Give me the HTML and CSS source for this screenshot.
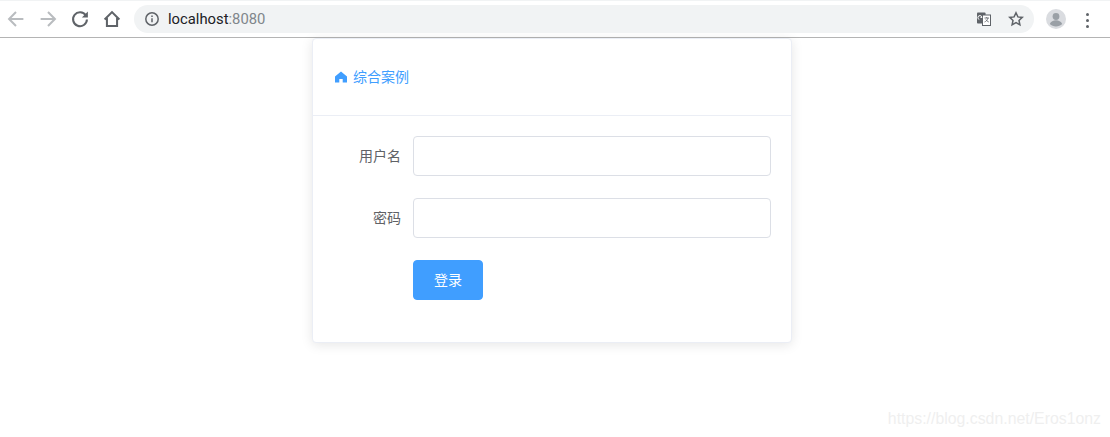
FILE: index.html
```html
<!DOCTYPE html>
<html lang="zh">
<head>
<meta charset="utf-8">
<title>综合案例</title>
<link rel="stylesheet" href="styles.css">
</head>
<body>
<header class="toolbar">
  <svg class="nav-icon" viewBox="-1 -1 26 26"><path class="dis" d="M20 12H5M12 4.500 4.500 12l7.500 7.500"/></svg>
  <svg class="nav-icon" viewBox="-1 -1 26 26"><path class="dis" d="M4 12h15M12 4.500l7.500 7.500-7.500 7.500"/></svg>
  <svg class="nav-icon" viewBox="-1 -1 26 26"><path class="act" d="M18.300 8.200A7.500 7.500 0 1 0 19.500 12.500"/><path class="fill" d="M20.500 4v6.500H14z"/></svg>
  <svg class="nav-icon" viewBox="-1 -1 26 26"><path class="act" d="M4 12.500 12 4.500l8 8M6.500 11v8.500h11V11"/></svg>
  <div class="omnibox">
    <svg class="info" viewBox="0 0 16 16"><circle cx="8" cy="8" r="6.200"/><path d="M8 7.200v4M8 4.400v1.600"/></svg>
    <span class="url">localhost<span class="port">:8080</span></span>
    <span class="omni-space"></span>
    <svg class="translate" viewBox="0 0 16 16"><rect x="1" y="1.500" width="8.500" height="11" rx=".8" class="t-dark"/><rect x="6.500" y="4" width="8" height="10.500" class="t-light"/><path class="t-w" d="M3.300 8.500a2 2 0 1 1 2.600-2H4.500"/><path class="t-k" d="M8.500 7h4.500M10.700 6v1M12 7c-.5 2-2 3.500-3.500 4M9.800 8.500c.6 1 1.600 2 3 2.500"/></svg>
    <svg class="star" viewBox="0 0 16 16"><path d="M8 1.800l1.900 4.100 4.400.5-3.300 3 .9 4.400L8 11.600l-3.900 2.200.9-4.400-3.300-3 4.400-.5z"/></svg>
  </div>
  <svg class="avatar" viewBox="0 0 20 20"><circle cx="10" cy="10" r="10" class="av-bg"/><circle cx="10" cy="7.500" r="3.400" class="av-fg"/><path class="av-fg" d="M3.800 15c1-2.600 3.600-3.700 6.200-3.700s5.200 1.100 6.200 3.700c-3 3.300-9.400 3.300-12.400 0z"/></svg>
  <div class="menu"><i></i><i></i><i></i></div>
</header>
<main class="page">
  <section class="card">
    <div class="card-header">
      <svg class="home" viewBox="0 0 12 12"><path d="M6 .5 0 5.600V11.500h4.300V8h3.400v3.500H12V5.600z"/></svg>
      <span class="title">综合案例</span>
    </div>
    <form class="card-body">
      <div class="row"><label class="label">用户名</label><input class="input" type="text"></div>
      <div class="row"><label class="label">密码</label><input class="input" type="password"></div>
      <div class="row last"><span class="label"></span><button class="btn" type="button">登录</button></div>
    </form>
  </section>
</main>
<div class="watermark">https://blog.csdn.net/Eros1onz</div>
</body>
</html>
```
FILE: styles.css
```css
* { box-sizing: border-box; }
html, body { margin: 0; padding: 0; background: #fff; }
body { height: 437px; overflow: hidden; position: relative; font-family: "Noto Sans CJK SC", "Liberation Sans", sans-serif; }
.toolbar { height: 38px; padding: 5px 0 0 4px; display: flex; align-items: flex-start; background: #fff; border-bottom: 1px solid #b4b4b4; box-shadow: inset 0 1px 0 #f1f3f4; }
.nav-icon { width: 24px; height: 24px; margin: 2px 8px 0 0; flex: none; fill: none; stroke-width: 2.200; }
.nav-icon .dis { stroke: #b9bcbf; }
.nav-icon .act { stroke: #5f6368; }
.nav-icon .fill { fill: #5f6368; stroke: none; }
.omnibox { width: 900px; height: 28px; margin-left: 2px; padding: 0 9px 0 10px; background: #f1f3f4; border-radius: 14px; display: flex; align-items: center; }
.info { width: 16px; height: 16px; fill: none; stroke: #5f6368; stroke-width: 1.500; flex: none; }
.url { margin-left: 8px; font: 14.800px "Roboto", "Liberation Sans", sans-serif; color: #202124; }
.port { color: #80868b; }
.omni-space { flex: 1; }
.translate { width: 16px; height: 16px; margin-right: 16px; flex: none; }
.t-dark { fill: #5f6368; }
.t-light { fill: #fff; stroke: #5f6368; stroke-width: 1; }
.t-w { fill: none; stroke: #fff; stroke-width: 1; }
.t-k { fill: none; stroke: #5f6368; stroke-width: .8; }
.star { width: 16px; height: 16px; margin-right: 1px; fill: none; stroke: #5f6368; stroke-width: 1.500; flex: none; }
.avatar { width: 20px; height: 20px; margin: 4px 0 0 12px; flex: none; }
.av-bg { fill: #dadce0; }
.av-fg { fill: #9aa0a6; }
.menu { margin: 8px 0 0 20px; display: flex; flex-direction: column; gap: 3px; }
.menu i { display: block; width: 3px; height: 3px; background: #5f6368; border-radius: 50%; }
.page { padding-left: 312px; }
.card { width: 480px; background: #fff; border: 1px solid #ebeef5; border-radius: 4px; box-shadow: 0 2px 12px rgba(0, 0, 0, .1); }
.card-header { height: 77px; padding: 0 20px 0 22px; display: flex; align-items: center; border-bottom: 1px solid #ebeef5; }
.home { width: 12px; height: 12px; fill: #409eff; flex: none; }
.title { margin-left: 6px; padding-bottom: 2px; font-size: 14px; line-height: 20px; color: #409eff; }
.card-body { padding: 20px 20px 42px 20px; }
.row { display: flex; align-items: center; margin-bottom: 22px; }
.row.last { margin-bottom: 0; }
.label { width: 80px; padding: 0 12px 2px 0; text-align: right; font-size: 14px; color: #606266; flex: none; }
.input { width: 358px; height: 40px; padding: 0 15px; border: 1px solid #dcdfe6; border-radius: 4px; background: #fff; outline: none; }
.btn { width: 70px; height: 40px; padding: 0 0 2px; border: 1px solid #409eff; border-radius: 4px; background: #409eff; color: #fff; font: 14px "Noto Sans CJK SC", sans-serif; }
.watermark { position: absolute; right: 9px; top: 409px; font: 15.850px/20px "Liberation Sans", sans-serif; color: #efefef; }
```
